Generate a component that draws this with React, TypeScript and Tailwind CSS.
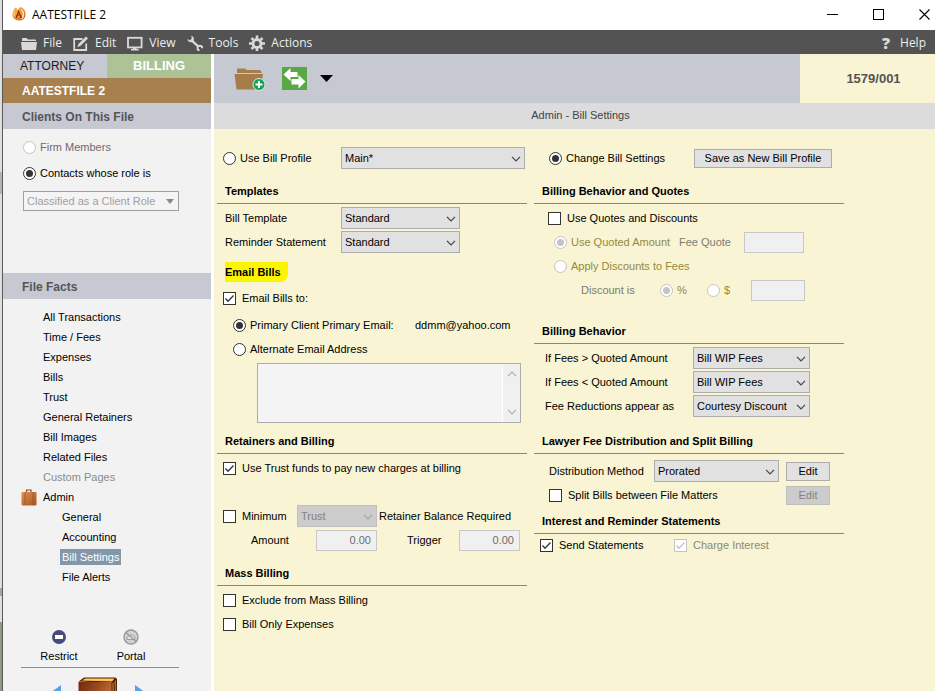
import React, { useId } from "react";
import clsx from "clsx";

const navItems = [
  "All Transactions",
  "Time / Fees",
  "Expenses",
  "Bills",
  "Trust",
  "General Retainers",
  "Bill Images",
  "Related Files",
];

const adminItems = ["General", "Accounting", "Bill Settings", "File Alerts"];

const AppLogo = () => (
  <svg viewBox="0 0 14 14" className="size-[14px]">
    <defs>
      <radialGradient id="ball" cx="0.35" cy="0.35" r="0.8">
        <stop offset="0" stopColor="#ffb347" />
        <stop offset="0.6" stopColor="#f08a2a" />
        <stop offset="1" stopColor="#c9500f" />
      </radialGradient>
    </defs>
    <path d="M3.4 0.6Q5.4 1.4 5.8 3Q6.8 1.2 8.6 0Q13.6 2.4 13.6 7.2Q13.2 13.4 7 13.6Q0.6 13.2 0.4 7.6Q0.6 3 3.4 0.6Z" fill="url(#ball)" />
    <path d="M8.2 1.2Q12.6 6 9.2 12.6Q12.2 11 12.2 7Q12 3 8.2 1.2Z" fill="#ffe9c4" />
    <path d="M3.4 1.8Q1 6 3.6 11.4Q1.6 9.6 1.5 7Q1.6 3.6 3.4 1.8Z" fill="#ffe2b0" />
    <path d="M6.6 3.6L4.4 10.2M6.4 3.6L9 10.2M5.2 8H8.2M3.6 10.2H5.4M7.8 10.2H10" stroke="#7d2608" strokeWidth="1.1" fill="none" />
  </svg>
);

const FolderIcon = () => (
  <svg viewBox="0 0 16 14" className="h-[14px] w-4" fill="#d9d9d9">
    <path d="M1 5V3.2Q1 2 2 2H5.5L7 3.4H14Q15 3.4 15 4.4V5Z" />
    <path d="M0 6H16L15 14H1Z" />
  </svg>
);

const EditIcon = () => (
  <svg viewBox="0 0 16 16" className="size-4">
    <path d="M9.5 4H1.2V15H13.2V8.5" fill="none" stroke="#d9d9d9" strokeWidth="1.8" />
    <path d="M13 1.6L15 3.6L7.6 10.8L4.2 12.2L5.6 8.8Z" fill="#d9d9d9" />
  </svg>
);

const MonitorIcon = () => (
  <svg viewBox="0 0 16 16" className="size-4">
    <rect x="1" y="2.8" width="13.6" height="9.6" fill="none" stroke="#d9d9d9" strokeWidth="1.8" />
    <path d="M6 13H9.6V14H11.6V15.6H4V14H6Z" fill="#d9d9d9" />
  </svg>
);

const WrenchIcon = () => (
  <svg viewBox="0 0 16 16" className="size-4">
    <path d="M4.6 5.4L11.4 11.6" stroke="#d9d9d9" strokeWidth="2.2" />
    <path d="M4.2 0.8Q7.4 1.6 6.8 5.2Q5.8 7.6 3 7.2Q0.4 6.6 0.2 3.8L2.6 5.4L4.8 3.4Z" fill="#d9d9d9" />
    <path d="M14.6 15A2.4 2.4 0 1 0 11 14.8" fill="none" stroke="#d9d9d9" strokeWidth="1.9" transform="rotate(-45 12.8 13.2)" />
  </svg>
);

const GearIcon = () => (
  <svg viewBox="0 0 16 16" className="size-4">
    <circle cx="8" cy="8.5" r="4" fill="none" stroke="#d9d9d9" strokeWidth="2.8" />
    <path
      d="M8 0.5V3.5M8 13.5V16M0 8.5H3M13 8.5H16M2.5 3L4.4 4.9M11.6 12.1L13.5 14M2.5 14L4.4 12.1M11.6 4.9L13.5 3"
      stroke="#d9d9d9"
      strokeWidth="2.6"
    />
  </svg>
);

const AddFolderIcon = () => (
  <svg viewBox="0 0 32 24" className="h-6 w-8">
    <path d="M3 6V2.5Q3 1.5 4 1.5H11L12.5 3H25Q27.5 3 27.5 5V6Z" fill="#a67c4b" />
    <path d="M0.5 7H29L28 14L24 22.5H2.5Z" fill="#a67c4b" />
    <circle cx="25" cy="17.5" r="6" fill="#12a454" stroke="#d8efe0" />
    <path d="M25 14V21M21.5 17.5H28.5" stroke="#fff" strokeWidth="2" />
  </svg>
);

const SwapIcon = () => (
  <svg viewBox="0 0 25 23" className="h-[23px] w-[25px]">
    <rect width="25" height="23" fill="#58a844" />
    <path d="M1.5 7.5L8.5 1V5H15.5V10H8.5V14Z" fill="#fff" />
    <path d="M23.5 14.5L16.5 8V12H9.5V17.5H16.5V21.5Z" fill="#fff" />
  </svg>
);

const BriefcaseIcon = () => (
  <svg viewBox="0 0 16 17" className="h-[17px] w-4">
    <defs>
      <linearGradient id="leather" x1="0" y1="0" x2="1" y2="1">
        <stop offset="0" stopColor="#dc9157" />
        <stop offset="1" stopColor="#a9541f" />
      </linearGradient>
    </defs>
    <path d="M5.5 3.6V1H10V3.6" fill="none" stroke="#8a4a22" strokeWidth="1.2" />
    <rect x="0.5" y="3" width="15" height="13.4" rx="0.8" fill="url(#leather)" />
    <path d="M4 3V16M12 3V16" stroke="#a05420" strokeWidth="0.8" />
  </svg>
);

const BookIcon = () => (
  <svg viewBox="0 0 40 40" className="size-10">
    <defs>
      <linearGradient id="cover" x1="0" y1="0" x2="1" y2="0.6">
        <stop offset="0" stopColor="#6e2a0c" />
        <stop offset="0.5" stopColor="#9c4b1e" />
        <stop offset="1" stopColor="#c47b45" />
      </linearGradient>
    </defs>
    <path d="M0.5 4.5L6 0.5H37.5L39 2V34L33 40V6Z" fill="#5a2208" />
    <path d="M4 3.6L7.5 1.4H36.5L34 4.6Z" fill="#f3b94d" />
    <path d="M6 2.8H35" stroke="#ffe08a" strokeWidth="0.8" />
    <path d="M34.5 6.5L37.8 3V33L34.5 37Z" fill="#c9822d" />
    <path d="M36.2 4V36" stroke="#5a2208" strokeWidth="1.2" />
    <path d="M0.5 5H33.5V40H0.5Z" fill="url(#cover)" />
  </svg>
);

const Chevron = ({ className }: { className?: string }) => (
  <svg viewBox="0 0 10 6" className={clsx("pointer-events-none h-[6px] w-[10px]", className)}>
    <path d="M1 0.8L5 4.8L9 0.8" fill="none" stroke="currentColor" strokeWidth="1.2" />
  </svg>
);

const Heading = ({ children, className }: { children: React.ReactNode; className?: string }) => (
  <h2 className={clsx("flex h-[26px] items-center border-b border-[#8c8a5c] px-2 pt-px font-bold", className)}>
    {children}
  </h2>
);

type ChoiceProps = {
  label: string;
  name?: string;
  checked?: boolean;
  disabled?: boolean;
  className?: string;
};

const Radio = ({ label, name, checked, disabled, className }: ChoiceProps) => (
  <label className={clsx("flex items-center gap-1", className)}>
    <input
      type="radio"
      name={name}
      defaultChecked={checked}
      disabled={disabled}
      className="grid size-[13px] shrink-0 appearance-none place-content-center rounded-full border border-[#333] bg-white before:size-[7px] before:rounded-full checked:before:bg-[#333] disabled:border-[#c4c4c4] disabled:checked:before:bg-[#c4c4c4]"
    />
    {label}
  </label>
);

const Checkbox = ({ label, checked, disabled, className }: ChoiceProps) => (
  <label className={clsx("flex items-center gap-[6px]", className)}>
    <span className="relative size-[13px] shrink-0">
      <input
        type="checkbox"
        defaultChecked={checked}
        disabled={disabled}
        className="peer block size-[13px] appearance-none border border-[#333] bg-white disabled:border-[#c4c4c4]"
      />
      <svg
        viewBox="0 0 13 13"
        className="pointer-events-none absolute inset-0 hidden text-[#333] peer-checked:block peer-disabled:text-[#c4c4c4]"
      >
        <path d="M2.5 6.5L5 9.2L10.5 3.5" fill="none" stroke="currentColor" strokeWidth="1.3" />
      </svg>
    </span>
    {label}
  </label>
);

type SelectProps = {
  label: string;
  value: string;
  labelClass?: string;
  className?: string;
  disabled?: boolean;
  hideLabel?: boolean;
};

const Select = ({ label, value, labelClass, className, disabled, hideLabel }: SelectProps) => {
  const id = useId();
  return (
    <>
      {!hideLabel && (
        <label htmlFor={id} className={clsx("shrink-0 whitespace-nowrap", labelClass)}>
          {label}
        </label>
      )}
      <span className={clsx("relative shrink-0", className)}>
        <select
          id={id}
          aria-label={hideLabel ? label : undefined}
          disabled={disabled}
          className="block h-[22px] w-full appearance-none border border-[#adadad] bg-[#e1e1e1] pl-[3px] disabled:border-[#bfbfbf] disabled:bg-[#cccccc] disabled:text-[#838383] disabled:opacity-100"
        >
          <option>{value}</option>
        </select>
        <Chevron className={clsx("absolute top-[9px] right-1", disabled ? "text-[#a5a5a5]" : "text-[#444]")} />
      </span>
    </>
  );
};

type FieldProps = { label: string; value?: string; labelClass?: string; className?: string; hideLabel?: boolean };

const Field = ({ label, value, labelClass, className, hideLabel }: FieldProps) => {
  const id = useId();
  return (
    <>
      {!hideLabel && (
        <label htmlFor={id} className={clsx("shrink-0", labelClass)}>
          {label}
        </label>
      )}
      <input
        id={id}
        aria-label={hideLabel ? label : undefined}
        defaultValue={value}
        disabled
        className={clsx("h-[21px] shrink-0 border border-[#c8c8c8] bg-[#f0f0f0] px-[5px] text-right text-[#6d6d6d]", className)}
      />
    </>
  );
};

const TitleBar = () => (
  <header className="flex h-[30px] shrink-0 items-center bg-white pr-[5px] pb-[2px] pl-[9px]">
    <AppLogo />
    <h1 className="ml-[6px] pt-px font-['Open_Sans',sans-serif] text-[12px] text-black">AATESTFILE 2</h1>
    <div className="ml-auto flex items-center gap-[35px]">
      <button aria-label="Minimize">
        <svg viewBox="0 0 11 11" className="size-[11px]">
          <path d="M0 5.5H11" stroke="#000" />
        </svg>
      </button>
      <button aria-label="Maximize">
        <svg viewBox="0 0 11 11" className="size-[11px]">
          <rect x="0.5" y="0.5" width="10" height="10" fill="none" stroke="#000" />
        </svg>
      </button>
      <button aria-label="Close">
        <svg viewBox="0 0 11 11" className="size-[11px]">
          <path d="M0.5 0.5L10.5 10.5M10.5 0.5L0.5 10.5" stroke="#000" strokeWidth="1.1" />
        </svg>
      </button>
    </div>
  </header>
);

const menus = [
  { label: "File", icon: <FolderIcon /> },
  { label: "Edit", icon: <EditIcon /> },
  { label: "View", icon: <MonitorIcon /> },
  { label: "Tools", icon: <WrenchIcon /> },
  { label: "Actions", icon: <GearIcon /> },
];

const MenuBar = () => (
  <nav className="flex h-6 shrink-0 items-center gap-[11px] bg-[#535353] pt-[2px] pr-[9px] pl-[18px] font-['Open_Sans',sans-serif] text-[12px] text-[#eeeeee]">
    {menus.map((menu) => (
      <button key={menu.label} className="flex items-center gap-[6px]">
        {menu.icon}
        {menu.label}
      </button>
    ))}
    <button className="ml-auto flex items-center gap-[10px]">
      <span className="text-[16px] font-extrabold text-[#d9d9d9]">?</span>
      Help
    </button>
  </nav>
);

const Sidebar = () => (
  <aside className="w-[208px] shrink-0 bg-[#f2f2f2]">
    <div className="grid h-6 grid-cols-2">
      <button className="bg-[#c6c8d2] pl-[17px] text-left text-[12px] text-[#1c1c1c]">ATTORNEY</button>
      <button className="bg-[#adc297] text-[13px] font-bold text-white">BILLING</button>
    </div>
    <p className="flex h-[25px] items-center bg-[#a8804e] pl-[19px] text-[12px] font-bold text-white">AATESTFILE 2</p>
    <h2 className="flex h-[26px] items-center bg-[#c6c8d2] pt-px pl-[19px] text-[12px] font-bold text-[#555]">
      Clients On This File
    </h2>
    <div className="h-36 pt-[5px] pl-5">
      <Radio name="clients" label="Firm Members" disabled className="h-[26px] text-[#6b6b6b]" />
      <Radio name="clients" label="Contacts whose role is" checked className="h-[26px]" />
      <div className="relative mt-[5px] w-[156px]">
        <select
          aria-label="Contact role"
          disabled
          className="block h-5 w-full appearance-none border border-[#a0a0a0] bg-[#f4f4f4] pl-[3px] text-[#a0a0a0] disabled:opacity-100"
        >
          <option>Classified as a Client Role</option>
        </select>
        <svg viewBox="0 0 8 5" className="pointer-events-none absolute top-2 right-[5px] h-[5px] w-2">
          <path d="M0 0H8L4 5Z" fill="#888" />
        </svg>
      </div>
    </div>
    <h2 className="flex h-[26px] items-center bg-[#c6c8d2] pt-px pl-[19px] text-[12px] font-bold text-[#555]">
      File Facts
    </h2>
    <ul className="mt-2 pl-10 leading-5">
      {navItems.map((item) => (
        <li key={item}>
          <a href="#">{item}</a>
        </li>
      ))}
      <li className="text-[#8a8a8a]">
        <a href="#">Custom Pages</a>
      </li>
    </ul>
    <div className="flex h-5 items-center gap-[6px] pl-[18px]">
      <BriefcaseIcon />
      <a href="#">Admin</a>
    </div>
    <ul className="pl-[57px]">
      {adminItems.map((item) => (
        <li key={item} className="flex h-5 items-center">
          <a href="#" className={clsx("px-[2px] leading-4", item === "Bill Settings" && "bg-[#8497a8] text-white")}>
            {item}
          </a>
        </li>
      ))}
    </ul>
    <div className="mt-[42px] mr-8 ml-[18px] flex border-b border-[#8f8f8f] pb-[2px]">
      <button className="flex w-[76px] flex-col items-center gap-[3px]">
        <svg viewBox="0 0 16 16" className="size-4">
          <circle cx="8" cy="8" r="7" fill="#464a7c" />
          <rect x="4" y="6" width="8" height="4" fill="#fff" />
        </svg>
        Restrict
      </button>
      <button className="flex w-[68px] flex-col items-center gap-[3px]">
        <svg viewBox="0 0 16 16" className="size-4" fill="none" stroke="#999">
          <circle cx="8" cy="8" r="7" fill="#d2d2d2" strokeWidth="1.4" />
          <path d="M4 10.5Q3 8 5.5 7.5Q7 4.5 9.5 6.5Q12.5 7 12 10.5Z" fill="#e6e6e6" />
          <path d="M3 3.5L13 12.5" strokeWidth="1.4" />
        </svg>
        Portal
      </button>
    </div>
    <div className="mt-[9px] flex justify-center gap-4 pr-[18px]">
      <svg viewBox="0 0 12 16" className="mt-2 h-4 w-3">
        <path d="M11 0V16L0 8Z" fill="#5c9dea" />
      </svg>
      <BookIcon />
      <svg viewBox="0 0 12 16" className="mt-2 h-4 w-3">
        <path d="M1 0V16L12 8Z" fill="#5c9dea" />
      </svg>
    </div>
  </aside>
);

const LeftColumn = () => (
  <div>
    <div className="flex h-[22px] items-center pl-[6px]">
      <Radio name="profile" label="Use Bill Profile" className="w-[118px]" />
      <Select label="Bill profile" hideLabel value="Main*" className="w-[184px]" />
    </div>

    <Heading className="mt-[9px]">Templates</Heading>
    <div className="pt-[2px] pl-2">
      <div className="flex h-6 items-center">
        <Select label="Bill Template" value="Standard" labelClass="w-[116px]" className="w-[119px]" />
      </div>
      <div className="flex h-6 items-center">
        <Select label="Reminder Statement" value="Standard" labelClass="w-[116px]" className="w-[119px]" />
      </div>
    </div>

    <h2 className="mt-2 ml-2 flex h-5 w-[63px] items-center rounded-br-lg bg-[#fbf500] font-bold">Email Bills</h2>
    <div className="pt-1 pl-[6px]">
      <Checkbox label="Email Bills to:" checked className="h-6" />
      <div className="mt-[3px] flex h-6 items-center pl-[10px]">
        <Radio name="email" label="Primary Client Primary Email:" checked className="w-[182px]" />
        <span>ddmm@yahoo.com</span>
      </div>
      <Radio name="email" label="Alternate Email Address" className="h-6 pl-[10px]" />
      <div className="relative mt-[2px] mr-[6px] ml-[34px]">
        <textarea
          aria-label="Alternate email addresses"
          disabled
          className="block h-[60px] w-full resize-none border border-[#adadad] bg-[#f4f4f4]"
        />
        <div className="absolute inset-y-px right-px flex w-[18px] flex-col items-center justify-between border-l border-white bg-[#f0f0f0] py-[7px] text-[#b0b0b0]">
          <Chevron className="rotate-180" />
          <Chevron />
        </div>
      </div>
    </div>

    <Heading className="mt-[5px]">Retainers and Billing</Heading>
    <div className="pt-[2px] pl-[6px]">
      <Checkbox label="Use Trust funds to pay new charges at billing" checked className="h-6" />
      <div className="mt-6 flex h-6 items-center">
        <Checkbox label="Minimum" className="w-[74px]" />
        <Select label="Minimum account" hideLabel value="Trust" disabled className="w-20" />
        <span className="ml-[2px]">Retainer Balance Required</span>
      </div>
      <div className="flex h-6 items-center pl-7">
        <Field label="Amount" value="0.00" labelClass="w-[65px]" className="w-[61px]" />
        <Field label="Trigger" value="0.00" labelClass="ml-[30px] w-[52px]" className="w-[61px]" />
      </div>
    </div>

    <Heading className="mt-2">Mass Billing</Heading>
    <div className="pt-[2px] pl-[6px]">
      <Checkbox label="Exclude from Mass Billing" className="h-6" />
      <Checkbox label="Bill Only Expenses" className="h-6" />
    </div>
  </div>
);

const RightColumn = () => (
  <div>
    <div className="flex h-[22px] items-center pl-[15px]">
      <Radio name="profile" label="Change Bill Settings" checked className="w-[145px]" />
      <button className="h-[19px] w-[138px] border border-[#adadad] bg-[#e1e1e1]">Save as New Bill Profile</button>
    </div>

    <Heading className="mt-[9px]">Billing Behavior and Quotes</Heading>
    <div className="pt-[2px] pl-[14px]">
      <Checkbox label="Use Quotes and Discounts" className="h-6" />
      <div className="flex h-6 items-center pl-[6px]">
        <Radio name="quote" label="Use Quoted Amount" checked disabled className="w-[125px] text-[#948a3c]" />
        <Field label="Fee Quote" labelClass="w-[65px] text-[#7c7c70]" className="w-[60px]" />
      </div>
      <Radio name="quote" label="Apply Discounts to Fees" disabled className="h-6 pl-[6px] text-[#948a3c]" />
      <div className="flex h-6 items-center pl-[33px] text-[#948a3c]">
        <span className="w-[79px] text-[#7c7c70]">Discount is</span>
        <Radio name="unit" label="%" checked disabled className="w-[47px]" />
        <Radio name="unit" label="$" disabled className="w-11" />
        <Field label="Discount" hideLabel className="w-[54px]" />
      </div>
    </div>

    <Heading className="mt-4">Billing Behavior</Heading>
    <div className="pt-[2px] pl-[11px]">
      <div className="flex h-6 items-center">
        <Select label="If Fees > Quoted Amount" value="Bill WIP Fees" labelClass="w-[148px]" className="w-[117px]" />
      </div>
      <div className="flex h-6 items-center">
        <Select label="If Fees < Quoted Amount" value="Bill WIP Fees" labelClass="w-[148px]" className="w-[117px]" />
      </div>
      <div className="flex h-6 items-center">
        <Select label="Fee Reductions appear as" value="Courtesy Discount" labelClass="w-[148px]" className="w-[117px]" />
      </div>
    </div>

    <Heading className="mt-[10px]">Lawyer Fee Distribution and Split Billing</Heading>
    <div className="pt-[5px] pr-[14px] pl-[15px]">
      <div className="flex h-6 items-center">
        <Select label="Distribution Method" value="Prorated" labelClass="w-[105px]" className="w-[125px]" />
        <button className="ml-auto h-[19px] w-11 border border-[#adadad] bg-[#e1e1e1]">Edit</button>
      </div>
      <div className="flex h-6 items-center justify-between">
        <Checkbox label="Split Bills between File Matters" />
        <button disabled className="h-[19px] w-11 border border-[#bfbfbf] bg-[#cccccc] text-[#838383]">
          Edit
        </button>
      </div>
    </div>

    <Heading className="mt-px">Interest and Reminder Statements</Heading>
    <div className="flex h-[22px] items-center pl-[6px]">
      <Checkbox label="Send Statements" checked className="w-[134px]" />
      <Checkbox label="Charge Interest" checked disabled className="text-[#8a8a78]" />
    </div>
  </div>
);

// sliver of whatever sits behind the window's left edge
const Backdrop = () => (
  <div className="flex w-[2px] shrink-0 flex-col bg-[#dedede]">
    <div className="h-[172px]" />
    <div className="h-[22px] bg-[#b4b4b4]" />
    <div className="h-[394px]" />
    <div className="h-2 bg-[#a9a88c]" />
    <div className="h-[26px]" />
    <div className="flex-1 bg-[#8c9c7c]" />
  </div>
);

export default function App() {
  return (
    <div className="flex h-screen overflow-hidden font-['Liberation_Sans',Arial,sans-serif] text-[11px] text-black">
      <Backdrop />
      <div className="flex min-w-0 flex-1 flex-col border-l border-[#5a5a5a] bg-white">
        <TitleBar />
        <MenuBar />
        <div className="flex min-h-0 flex-1 gap-[3px]">
          <Sidebar />
          <main className="min-w-0 flex-1 bg-[#f9f4d3]">
            <div className="flex h-[49px]">
              <div className="flex flex-1 items-center gap-4 bg-[#c6c8d2] pl-5">
                <button aria-label="Add folder">
                  <AddFolderIcon />
                </button>
                <button aria-label="Switch file" className="flex items-center gap-[13px]">
                  <SwapIcon />
                  <svg viewBox="0 0 13 7" className="h-[7px] w-[13px]">
                    <path d="M0 0H13L6.5 7Z" fill="#000" />
                  </svg>
                </button>
              </div>
              <p className="flex w-[135px] items-center justify-center pl-3 text-[13px] font-bold text-[#555]">
                1579/001
              </p>
            </div>
            <p className="h-[26px] bg-[#dcdcdc] pl-3 text-center leading-6 text-[#444]">Admin - Bill Settings</p>
            <form className="grid max-w-[630px] grid-cols-2 gap-[7px] pt-[18px] pl-[3px]">
              <LeftColumn />
              <RightColumn />
            </form>
          </main>
        </div>
      </div>
    </div>
  );
}
